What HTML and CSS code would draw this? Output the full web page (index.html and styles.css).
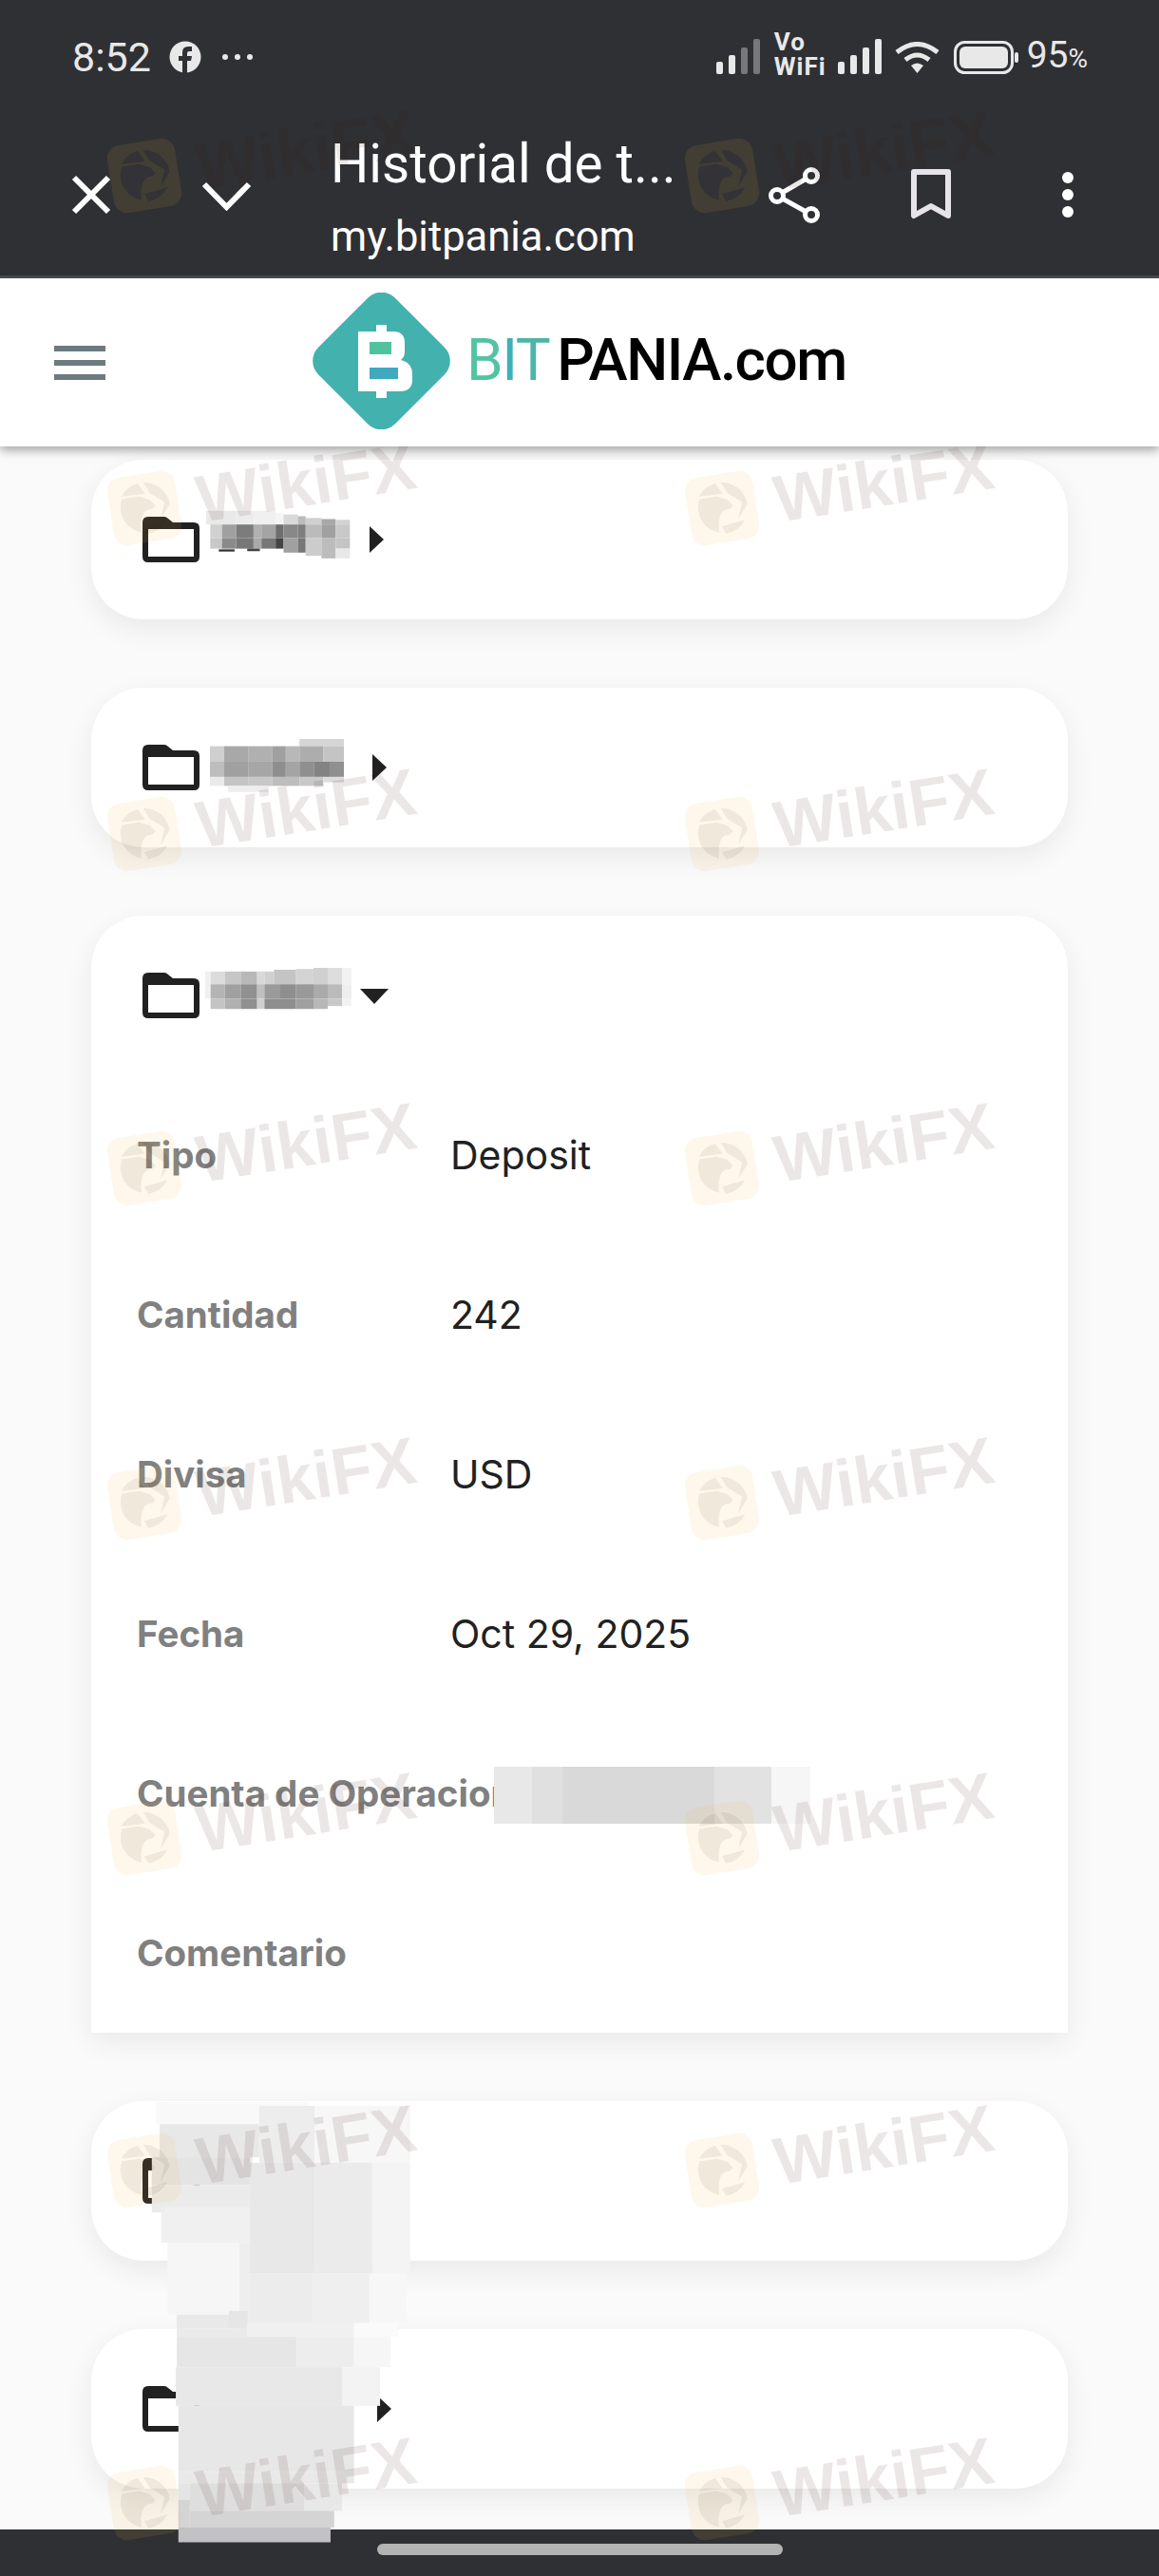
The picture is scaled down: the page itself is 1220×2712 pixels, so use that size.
FILE: index.html
```html
<!DOCTYPE html>
<html lang="en">

<head>
    <meta charset="UTF-8">
    <title>Historial de transacciones</title>
    <link rel="stylesheet" href="styles.css">
</head>

<body>
    <svg class="defs" width="0" height="0">
        <symbol id="eagle" viewBox="0 0 72 72">
            <path d="M14 23L32 23L43 28L48 35L44 38C36 37 30 42 29 61A27 27 0 0 1 14 23Z" />
            <path d="M14 20A27 27 0 0 1 33 9.200L39 21Z" />
            <path d="M39 9.200A27 27 0 0 1 63 36L51 50L58 33L44 21Z" />
            <path d="M58 52A27 27 0 0 1 36 63L33 55Z" />
        </symbol>
        <symbol id="folder" viewBox="0 0 60 48">
            <path fill-rule="evenodd" d="M6 0H23Q25 0 27 2L32 6H54Q60 6 60 12V42Q60 48 54 48H6Q0 48 0 42V6Q0 0 6 0ZM6 13V42H54V13Z" />
        </symbol>
    </svg>

    <div class="page">
        <!-- browser chrome -->
        <div class="chrome">
            <div class="status">
                <span class="clock">8:52</span>
                <svg class="fb" width="34" height="34" viewBox="0 0 34 34">
                    <circle cx="17" cy="17" r="16.5" fill="#e8e8e8" />
                    <path d="M14 34V21H10V16H14V12Q14 6 20 6H24V11H21Q19 11 19 13V16H24L23 21H19V34Z" fill="#2f3034" />
                </svg>
                <span class="status-dots"><i></i><i></i><i></i></span>

                <div class="status-right">
                    <svg width="46" height="37" viewBox="0 0 46 37">
                        <rect x="0" y="24" width="7" height="13" rx="2" fill="#e8e8e8" />
                        <rect x="13" y="17" width="7" height="20" rx="2" fill="#e8e8e8" />
                        <rect x="26" y="9" width="7" height="28" rx="2" fill="#77787a" />
                        <rect x="39" y="0" width="7" height="37" rx="2" fill="#77787a" />
                    </svg>
                    <div class="vowifi"><span>Vo</span><span>WiFi</span></div>
                    <svg width="46" height="37" viewBox="0 0 46 37">
                        <rect x="0" y="24" width="7" height="13" rx="2" fill="#e8e8e8" />
                        <rect x="13" y="17" width="7" height="20" rx="2" fill="#e8e8e8" />
                        <rect x="26" y="9" width="7" height="28" rx="2" fill="#e8e8e8" />
                        <rect x="39" y="0" width="7" height="37" rx="2" fill="#e8e8e8" />
                    </svg>
                    <svg class="wifi" width="49" height="34" viewBox="0 0 49 34">
                        <path d="M3 11Q24.500 -6 46 11" fill="none" stroke="#e8e8e8" stroke-width="5" />
                        <path d="M12 19Q24.500 9 37 19" fill="none" stroke="#e8e8e8" stroke-width="5" />
                        <path d="M18 25Q24.500 20 31 25L24.500 33Z" fill="#e8e8e8" />
                    </svg>
                    <svg class="battery" width="68" height="35" viewBox="0 0 68 35">
                        <rect x="1.500" y="1.500" width="60" height="32" rx="10" fill="none" stroke="#e8e8e8" stroke-width="3" />
                        <rect x="6" y="6" width="51" height="23" rx="6" fill="#e8e8e8" />
                        <rect x="64" y="12" width="4" height="11" rx="2" fill="#e8e8e8" />
                    </svg>
                    <span class="percent">95<small>%</small></span>
                </div>
            </div>

            <div class="toolbar">
                <svg class="tb-close" width="42" height="42" viewBox="0 0 42 42">
                    <path d="M3 3L39 39M39 3L3 39" fill="none" stroke="#fff" stroke-width="6" />
                </svg>
                <svg class="tb-chevron" width="53" height="31" viewBox="0 0 53 31">
                    <path d="M3 3L26.500 27L50 3" fill="none" stroke="#fff" stroke-width="6" />
                </svg>
                <div class="tb-title">
                    <div class="tb-name">Historial de t...</div>
                    <div class="tb-url">my.bitpania.com</div>
                </div>
                <svg class="tb-share" width="54" height="59" viewBox="0 0 54 59">
                    <path d="M45 9L9 30L45 50" fill="none" stroke="#fff" stroke-width="5" />
                    <circle cx="45" cy="9" r="6.500" fill="#2f3034" stroke="#fff" stroke-width="5" />
                    <circle cx="9" cy="30" r="6.500" fill="#2f3034" stroke="#fff" stroke-width="5" />
                    <circle cx="45" cy="50" r="6.500" fill="#2f3034" stroke="#fff" stroke-width="5" />
                </svg>
                <svg class="tb-bookmark" width="42" height="54" viewBox="0 0 42 54">
                    <path d="M3 3H39V49L21 39L3 49Z" fill="none" stroke="#e6e4ea" stroke-width="6" stroke-linejoin="round" />
                </svg>
                <div class="tb-more"><i></i><i></i><i></i></div>
            </div>
        </div>

        <!-- site header -->
        <header class="site-head">
            <div class="burger"><i></i><i></i><i></i></div>
            <svg class="brand-mark" width="145" height="144" viewBox="0 0 145 144">
                <rect x="15.500" y="15" width="114" height="114" rx="20" transform="rotate(45 72.500 72)" fill="#43b2ae" />
                <path d="M48 41H67V34H78V41H85Q97 41 97 53V62Q97 68 93 71Q105 74 105 86V92Q105 104 92 104H78V111H67V104H48Z" fill="#fff" />
                <rect x="60" y="52" width="23" height="13" fill="#4fc3a0" />
                <rect x="60" y="79" width="30" height="12" fill="#40a9c0" />
            </svg>
            <div class="brand-name"><span class="bit-b">B</span><span class="bit-i">I</span><span class="bit-t">T</span><span class="pania">PANIA.com</span></div>
        </header>

        <!-- transaction folders -->
        <main class="list">
            <section class="card">
                <div class="card-head">
                    <svg class="folder"><use href="#folder" /></svg>
                    <svg class="blur blur-one" viewBox="470 148 460 137" preserveAspectRatio="none">
                        <rect x="470" y="150" width="95" height="38" fill="#e9e9e9" />
                        <rect x="565" y="150" width="55" height="38" fill="#ececec" />
                        <rect x="620" y="150" width="70" height="38" fill="#f0f0f0" />
                        <rect x="690" y="155" width="25" height="33" fill="#f5f5f5" />
                        <rect x="715" y="160" width="45" height="28" fill="#d9d9d9" />
                        <rect x="760" y="165" width="25" height="23" fill="#bbbbbb" />
                        <rect x="785" y="170" width="50" height="18" fill="#d0d0d0" />
                        <rect x="835" y="173" width="45" height="15" fill="#a8a8a8" />
                        <rect x="880" y="175" width="45" height="13" fill="#d2d2d2" />
                        <rect x="483" y="188" width="37" height="38" fill="#d0d0d0" />
                        <rect x="520" y="188" width="45" height="38" fill="#a0a0a0" />
                        <rect x="565" y="188" width="55" height="38" fill="#7c7c7c" />
                        <rect x="620" y="188" width="25" height="38" fill="#b0b0b0" />
                        <rect x="645" y="188" width="45" height="38" fill="#a4a4a4" />
                        <rect x="690" y="188" width="25" height="38" fill="#6e6e6e" />
                        <rect x="715" y="188" width="45" height="38" fill="#888888" />
                        <rect x="760" y="188" width="25" height="38" fill="#7e7e7e" />
                        <rect x="785" y="188" width="50" height="38" fill="#bbbbbb" />
                        <rect x="835" y="188" width="45" height="38" fill="#a0a0a0" />
                        <rect x="880" y="188" width="45" height="38" fill="#c8c8c8" />
                        <rect x="483" y="226" width="37" height="29" fill="#c8c8c8" />
                        <rect x="520" y="226" width="45" height="29" fill="#8a8a8a" />
                        <rect x="565" y="226" width="55" height="29" fill="#777777" />
                        <rect x="620" y="226" width="25" height="29" fill="#aaaaaa" />
                        <rect x="645" y="226" width="45" height="29" fill="#777777" />
                        <rect x="690" y="226" width="25" height="29" fill="#444444" />
                        <rect x="715" y="226" width="45" height="40" fill="#a0a0a0" />
                        <rect x="760" y="226" width="25" height="40" fill="#777777" />
                        <rect x="785" y="226" width="50" height="49" fill="#cccccc" />
                        <rect x="835" y="226" width="45" height="56" fill="#bcbcbc" />
                        <rect x="880" y="226" width="45" height="29" fill="#c4c4c4" />
                        <rect x="880" y="255" width="45" height="27" fill="#e8e8e8" />
                        <rect x="510" y="257" width="50" height="6" fill="#333333" />
                        <rect x="600" y="255" width="40" height="7" fill="#444444" />
                    </svg>
                    <span class="caret caret-one"></span>
                </div>
            </section>

            <section class="card">
                <div class="card-head">
                    <svg class="folder"><use href="#folder" /></svg>
                    <svg class="blur blur-two" viewBox="483 775 422 150" preserveAspectRatio="none">
                        <rect x="765" y="775" width="140" height="20" fill="#d5d5d5" />
                        <rect x="483" y="795" width="45" height="43" fill="#cfcfcf" />
                        <rect x="528" y="795" width="77" height="43" fill="#a8a8a8" />
                        <rect x="605" y="795" width="75" height="43" fill="#b0b0b0" />
                        <rect x="680" y="795" width="42" height="43" fill="#a0a0a0" />
                        <rect x="722" y="795" width="43" height="43" fill="#b8b8b8" />
                        <rect x="765" y="795" width="75" height="43" fill="#adadad" />
                        <rect x="840" y="795" width="65" height="43" fill="#c4c4c4" />
                        <rect x="483" y="838" width="45" height="42" fill="#bdbdbd" />
                        <rect x="528" y="838" width="77" height="42" fill="#a0a0a0" />
                        <rect x="605" y="838" width="75" height="42" fill="#a6a6a6" />
                        <rect x="680" y="838" width="42" height="42" fill="#8e8e8e" />
                        <rect x="722" y="838" width="43" height="42" fill="#a4a4a4" />
                        <rect x="765" y="838" width="45" height="42" fill="#8f8f8f" />
                        <rect x="810" y="838" width="50" height="42" fill="#838383" />
                        <rect x="860" y="838" width="45" height="42" fill="#909090" />
                        <rect x="483" y="880" width="45" height="25" fill="#eaeaea" />
                        <rect x="528" y="880" width="77" height="25" fill="#c4c4c4" />
                        <rect x="605" y="880" width="75" height="25" fill="#c8c8c8" />
                        <rect x="680" y="880" width="85" height="25" fill="#bdbdbd" />
                        <rect x="765" y="880" width="75" height="25" fill="#c8c8c8" />
                        <rect x="840" y="880" width="65" height="15" fill="#dddddd" />
                        <rect x="540" y="905" width="128" height="17" fill="#eeeeee" />
                    </svg>
                    <span class="caret caret-two"></span>
                </div>
            </section>

            <section class="card card-open">
                <div class="card-head">
                    <svg class="folder"><use href="#folder" /></svg>
                    <svg class="blur blur-three" viewBox="468 1405 462 115" preserveAspectRatio="none">
                        <rect x="468" y="1415" width="17" height="75" fill="#f0f0f0" />
                        <rect x="485" y="1415" width="45" height="35" fill="#dcdcdc" />
                        <rect x="530" y="1415" width="50" height="35" fill="#c6c6c6" />
                        <rect x="580" y="1415" width="52" height="35" fill="#b8b8b8" />
                        <rect x="632" y="1415" width="23" height="35" fill="#d8d8d8" />
                        <rect x="655" y="1415" width="30" height="35" fill="#d0d0d0" />
                        <rect x="685" y="1410" width="70" height="40" fill="#c4c4c4" />
                        <rect x="755" y="1408" width="55" height="42" fill="#d4d4d4" />
                        <rect x="810" y="1405" width="45" height="45" fill="#d0d0d0" />
                        <rect x="855" y="1405" width="45" height="45" fill="#dddddd" />
                        <rect x="900" y="1405" width="30" height="45" fill="#f2f2f2" />
                        <rect x="485" y="1450" width="45" height="40" fill="#b4b4b4" />
                        <rect x="530" y="1450" width="50" height="40" fill="#a0a0a0" />
                        <rect x="580" y="1450" width="52" height="40" fill="#909090" />
                        <rect x="632" y="1450" width="23" height="40" fill="#c0c0c0" />
                        <rect x="655" y="1450" width="50" height="40" fill="#9a9a9a" />
                        <rect x="705" y="1450" width="50" height="40" fill="#8e8e8e" />
                        <rect x="755" y="1450" width="55" height="40" fill="#999999" />
                        <rect x="810" y="1450" width="45" height="40" fill="#aaaaaa" />
                        <rect x="855" y="1450" width="45" height="40" fill="#bbbbbb" />
                        <rect x="900" y="1450" width="30" height="40" fill="#eeeeee" />
                        <rect x="485" y="1490" width="45" height="28" fill="#c4c4c4" />
                        <rect x="530" y="1490" width="50" height="28" fill="#b0b0b0" />
                        <rect x="580" y="1490" width="52" height="28" fill="#909090" />
                        <rect x="632" y="1490" width="23" height="28" fill="#d0d0d0" />
                        <rect x="655" y="1490" width="100" height="28" fill="#8e8e8e" />
                        <rect x="755" y="1490" width="55" height="28" fill="#a0a0a0" />
                        <rect x="810" y="1490" width="45" height="28" fill="#b8b8b8" />
                        <rect x="855" y="1490" width="45" height="20" fill="#c8c8c8" />
                        <rect x="900" y="1490" width="30" height="20" fill="#f2f2f2" />
                    </svg>
                    <span class="caret-down"></span>
                </div>
                <div class="row"><span class="row-label">Tipo</span><span class="row-value">Deposit</span></div>
                <div class="row"><span class="row-label">Cantidad</span><span class="row-value">242</span></div>
                <div class="row"><span class="row-label">Divisa</span><span class="row-value">USD</span></div>
                <div class="row"><span class="row-label">Fecha</span><span class="row-value">Oct 29, 2025</span></div>
                <div class="row">
                    <span class="row-label">Cuenta de Operacion</span>
                    <div class="acct-blur"><i></i><i></i><i></i><i></i><i></i></div>
                </div>
                <div class="row"><span class="row-label">Comentario</span></div>
            </section>

            <section class="card">
                <div class="card-head">
                    <svg class="folder"><use href="#folder" /></svg>
                </div>
            </section>

            <section class="card">
                <div class="card-head">
                    <svg class="folder"><use href="#folder" /></svg>
                    <span class="caret caret-five"></span>
                </div>
            </section>
        </main>

        <div class="nav-bar"><span class="home-pill"></span></div>

        <!-- big blurred patch over the last two folders -->
        <svg class="patch" width="860" height="912" viewBox="0 0 1568 1568" preserveAspectRatio="none">
            <rect x="190" y="710" width="290" height="40" fill="#f9f9f9" />
            <rect x="197" y="750" width="191" height="60" fill="#e8e8e8" />
            <rect x="388" y="717" width="107" height="103" fill="#ededed" />
            <rect x="495" y="717" width="183" height="103" fill="#f7f7f7" />
            <rect x="182" y="810" width="188" height="50" fill="#e4e4e4" />
            <rect x="182" y="860" width="188" height="50" fill="#ebebeb" />
            <rect x="370" y="820" width="125" height="200" fill="#e8e8e8" />
            <rect x="495" y="820" width="110" height="200" fill="#ebebeb" />
            <rect x="605" y="820" width="73" height="200" fill="#f4f4f4" />
            <rect x="200" y="900" width="170" height="65" fill="#f0f0f0" />
            <rect x="212" y="965" width="138" height="130" fill="#f6f6f6" />
            <rect x="350" y="965" width="20" height="145" fill="#eeeeee" />
            <rect x="370" y="1020" width="120" height="90" fill="#ececec" />
            <rect x="490" y="1020" width="110" height="90" fill="#efefef" />
            <rect x="600" y="1020" width="70" height="90" fill="#f7f7f7" />
            <rect x="230" y="1095" width="100" height="25" fill="#e9e9e9" />
            <rect x="330" y="1088" width="36" height="32" fill="#e6e6e6" />
            <rect x="365" y="1110" width="205" height="25" fill="#f0f0f0" />
            <rect x="570" y="1110" width="85" height="25" fill="#fafafa" />
            <rect x="230" y="1120" width="135" height="15" fill="#eaeaea" />
            <rect x="230" y="1135" width="230" height="55" fill="#e6e6e6" />
            <rect x="460" y="1135" width="110" height="55" fill="#ededed" />
            <rect x="570" y="1135" width="70" height="55" fill="#f6f6f6" />
            <rect x="228" y="1190" width="320" height="70" fill="#e8e8e8" />
            <rect x="548" y="1190" width="72" height="70" fill="#f3f3f3" />
            <rect x="233" y="1260" width="337" height="120" fill="#e7e7e7" />
            <rect x="233" y="1380" width="337" height="20" fill="#e9e9e9" />
            <rect x="233" y="1400" width="22" height="30" fill="#e5e5e5" />
            <rect x="255" y="1400" width="220" height="50" fill="#dedede" />
            <rect x="475" y="1400" width="72" height="50" fill="#e8e8e8" />
            <rect x="233" y="1430" width="22" height="50" fill="#d4d4d4" />
            <rect x="255" y="1450" width="277" height="30" fill="#d4d4d4" />
            <rect x="233" y="1480" width="292" height="27" fill="#c2c2c4" />
        </svg>

        <!-- watermark, on top of everything -->
        <div class="wm-layer">
            <div class="wm wm-dark"><svg class="wm-logo"><use href="#eagle" /></svg><span class="wm-text">WikiFX</span></div>
            <div class="wm wm-dark"><svg class="wm-logo"><use href="#eagle" /></svg><span class="wm-text">WikiFX</span></div>
            <div class="wm"><svg class="wm-logo"><use href="#eagle" /></svg><span class="wm-text">WikiFX</span></div>
            <div class="wm"><svg class="wm-logo"><use href="#eagle" /></svg><span class="wm-text">WikiFX</span></div>
            <div class="wm"><svg class="wm-logo"><use href="#eagle" /></svg><span class="wm-text">WikiFX</span></div>
            <div class="wm"><svg class="wm-logo"><use href="#eagle" /></svg><span class="wm-text">WikiFX</span></div>
            <div class="wm"><svg class="wm-logo"><use href="#eagle" /></svg><span class="wm-text">WikiFX</span></div>
            <div class="wm"><svg class="wm-logo"><use href="#eagle" /></svg><span class="wm-text">WikiFX</span></div>
            <div class="wm"><svg class="wm-logo"><use href="#eagle" /></svg><span class="wm-text">WikiFX</span></div>
            <div class="wm"><svg class="wm-logo"><use href="#eagle" /></svg><span class="wm-text">WikiFX</span></div>
            <div class="wm"><svg class="wm-logo"><use href="#eagle" /></svg><span class="wm-text">WikiFX</span></div>
            <div class="wm"><svg class="wm-logo"><use href="#eagle" /></svg><span class="wm-text">WikiFX</span></div>
            <div class="wm"><svg class="wm-logo"><use href="#eagle" /></svg><span class="wm-text">WikiFX</span></div>
            <div class="wm"><svg class="wm-logo"><use href="#eagle" /></svg><span class="wm-text">WikiFX</span></div>
            <div class="wm"><svg class="wm-logo"><use href="#eagle" /></svg><span class="wm-text">WikiFX</span></div>
            <div class="wm"><svg class="wm-logo"><use href="#eagle" /></svg><span class="wm-text">WikiFX</span></div>
        </div>
    </div>
</body>

</html>
```

FILE: styles.css
```css
/* page frame */

html,
body {
    margin: 0;
    padding: 0;
    background: #fafafa;
    overflow: hidden;
}

.defs {
    position: absolute;
}

.page {
    position: relative;
    display: flex;
    flex-direction: column;
    width: 1220px;
    height: 2712px;
    overflow: hidden;
    font-family: Inter, "Liberation Sans", sans-serif;
}

/* browser chrome */

.chrome {
    background: #2f3034;
    border-bottom: 3px solid #4a4b4f;
    height: 290px;
    font-family: Roboto, "Liberation Sans", sans-serif;
}

.status {
    display: flex;
    align-items: center;
    height: 120px;
    padding: 0 75px 0 76px;
    color: #e8e8e8;
}

.clock {
    font-size: 43px;
    width: 102px;
}

.status-dots {
    display: flex;
    gap: 7px;
    margin-left: 22px;
}

.status-dots i {
    width: 6px;
    height: 6px;
    border-radius: 50%;
    background: #e8e8e8;
}

.status-right {
    display: flex;
    align-items: flex-end;
    margin-left: auto;
    height: 42px;
    padding-bottom: 6px;
}

.vowifi {
    display: flex;
    flex-direction: column;
    margin: 0 12px -5px 15px;
    font-size: 26px;
    font-weight: 700;
    letter-spacing: 1px;
    line-height: 26px;
}

.wifi {
    margin-left: 13px;
}

.battery {
    margin-left: 14px;
}

.percent {
    margin-left: 9px;
    font-size: 39px;
    line-height: 32px;
}

.percent small {
    font-size: 28px;
}

.toolbar {
    display: flex;
    align-items: center;
    height: 170px;
    padding-left: 75px;
}

.tb-close {
    flex: none;
}

.tb-chevron {
    flex: none;
    margin-left: 95px;
    margin-top: 2px;
}

.tb-title {
    width: 461px;
    margin-left: 83px;
    flex: none;
    color: #fff;
    padding-top: 4px;
}

.tb-name {
    font-size: 56.500px;
    line-height: 66px;
}

.tb-url {
    font-size: 43.500px;
    line-height: 50px;
    margin-top: 19px;
}

.tb-bookmark {
    margin-left: 96px;
}

.tb-more {
    display: flex;
    flex-direction: column;
    gap: 6px;
    margin-left: 117px;
}

.tb-more i {
    width: 12px;
    height: 12px;
    border-radius: 50%;
    background: #fff;
}

/* site header */

.site-head {
    position: relative;
    z-index: 2;
    display: flex;
    align-items: center;
    flex: none;
    height: 177px;
    background: #fff;
    box-shadow: 0 4px 10px rgba(0, 0, 0, 0.35);
    padding-left: 57px;
}

.burger {
    display: flex;
    flex-direction: column;
    gap: 9px;
    width: 54px;
}

.burger i {
    height: 6px;
    background: #6d7b80;
}

.brand-mark {
    margin-left: 218px;
    margin-bottom: 3px;
}

.brand-name {
    margin-left: 17px;
    margin-bottom: 7px;
    font-family: Roboto, "Liberation Sans", sans-serif;
    font-size: 62px;
    letter-spacing: -1.500px;
}

.bit-b {
    color: #52c3a3;
}

.bit-i {
    color: #3fb0b8;
}

.bit-t {
    color: #4db5a6;
}

.pania {
    margin-left: 8px;
    font-weight: 500;
    color: #000;
}

/* folders */

.list {
    display: flex;
    flex-direction: column;
    flex: 1;
    gap: 72px;
    padding: 14px 96px 0;
    overflow: hidden;
}

.card {
    background: #fff;
    border-radius: 55px;
    box-shadow: 0 10px 30px rgba(0, 0, 0, 0.07);
    flex: none;
}

.card-open {
    border-radius: 55px 55px 0 0;
}

.card-head {
    display: flex;
    align-items: center;
    height: 168px;
    padding-left: 54px;
}

.folder {
    flex: none;
    width: 60px;
    height: 48px;
    fill: #212121;
}

.blur {
    flex: none;
}

.blur-one {
    width: 153px;
    height: 52px;
    margin-left: 7px;
    margin-bottom: 10px;
}

.blur-two {
    width: 141px;
    height: 57px;
    margin-left: 11px;
    margin-bottom: 4px;
}

.blur-three {
    width: 154px;
    height: 44px;
    margin-left: 6px;
    margin-bottom: 14px;
}

.caret {
    width: 0;
    height: 0;
    border-left: 15px solid #212121;
    border-top: 14.500px solid transparent;
    border-bottom: 14.500px solid transparent;
}

.caret-one {
    margin-left: 19px;
}

.caret-two {
    margin-left: 30px;
}

.caret-five {
    margin-left: 187px;
}

.caret-down {
    width: 0;
    height: 0;
    margin-left: 9px;
    margin-top: 2px;
    border-top: 16px solid #212121;
    border-left: 15px solid transparent;
    border-right: 15px solid transparent;
}

.row {
    position: relative;
    display: flex;
    align-items: center;
    height: 168px;
    padding-left: 48px;
    font-size: 38.500px;
}

.row-label {
    flex: none;
    width: 330px;
    white-space: nowrap;
    font-weight: 700;
    color: #808080;
}

.row-value {
    font-size: 41px;
    color: #212121;
}

/* blurred account number, lies over the end of the label */

.acct-blur {
    position: absolute;
    left: 424px;
    top: 56px;
    display: flex;
    width: 333px;
    height: 60px;
}

.acct-blur i {
    background: #dcdcdc;
}

.acct-blur i:nth-child(1) {
    width: 40px;
    background: #e8e8e8;
}

.acct-blur i:nth-child(2) {
    width: 32px;
    background: #e0e0e0;
}

.acct-blur i:nth-child(3) {
    width: 160px;
    background: #d9d9d9;
}

.acct-blur i:nth-child(4) {
    width: 60px;
    background: #e2e2e2;
}

.acct-blur i:nth-child(5) {
    width: 41px;
    background: #f6f6f6;
}

/* bottom gesture bar */

.nav-bar {
    position: relative;
    display: flex;
    justify-content: center;
    flex: none;
    height: 49px;
    background: #2f3034;
}

.home-pill {
    width: 427px;
    height: 12px;
    margin-top: 15px;
    border-radius: 6px;
    background: #b3b3b3;
}

.patch {
    position: absolute;
    left: 60px;
    top: 1800px;
}

/* watermark */

.wm-layer {
    position: absolute;
    left: 0;
    top: 0;
    right: 0;
    bottom: 0;
    display: grid;
    grid-template-columns: 608px 612px;
    grid-template-rows: 350px 343px 352px 352px 353px 350px 350px 262px;
    padding-top: 149px;
    box-sizing: border-box;
    pointer-events: none;
}

.wm {
    display: flex;
    align-items: center;
    align-self: start;
    height: 72px;
    padding-left: 116px;
    transform-origin: 152px 36px;
    transform: rotate(-9deg);
}

.wm-logo {
    flex: none;
    width: 72px;
    height: 72px;
    border-radius: 14px;
    background: rgba(240, 190, 60, 0.1);
    fill: rgba(60, 30, 20, 0.07);
}

.wm-dark .wm-logo {
    fill: #333236;
}

.wm-text {
    margin-left: 20px;
    font-family: "Liberation Sans", sans-serif;
    font-size: 70px;
    font-weight: 700;
    color: rgba(60, 20, 10, 0.1);
}
```
